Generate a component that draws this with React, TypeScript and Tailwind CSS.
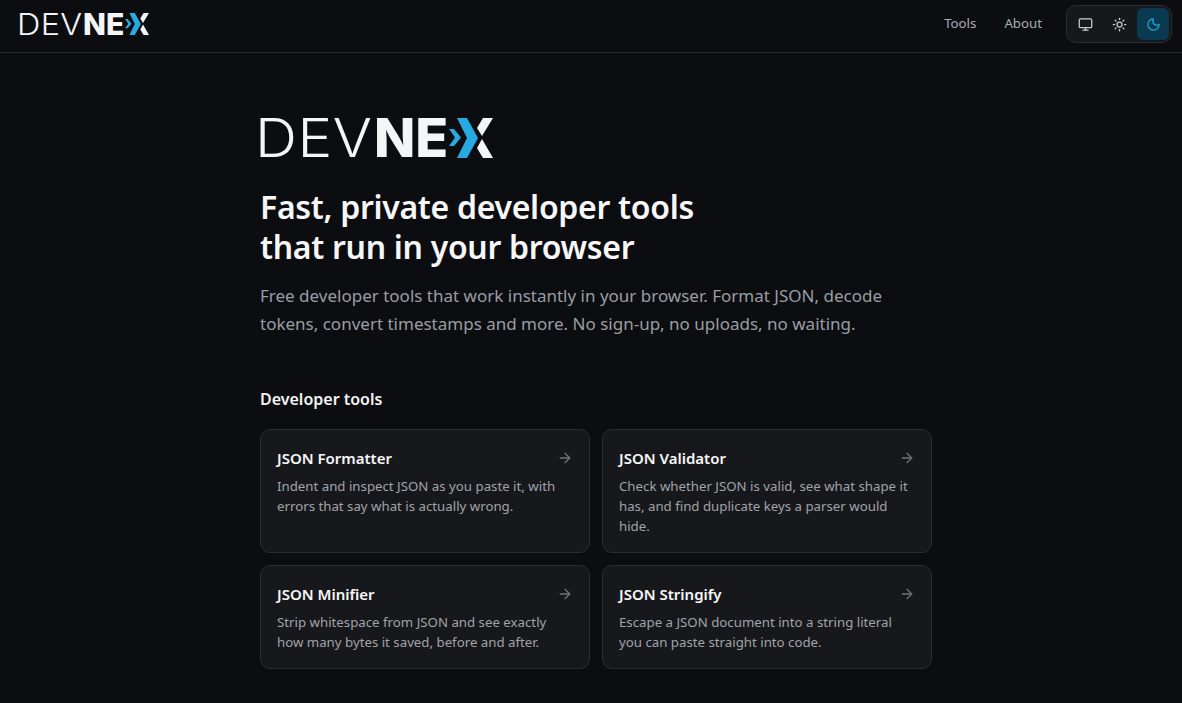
import { ArrowRight, Monitor, Moon, Sun } from 'lucide-react';

const TOOLS = [
  {
    name: 'JSON Formatter',
    text: 'Indent and inspect JSON as you paste it, with errors that say what is actually wrong.',
  },
  {
    name: 'JSON Validator',
    text: 'Check whether JSON is valid, see what shape it has, and find duplicate keys a parser would hide.',
  },
  {
    name: 'JSON Minifier',
    text: 'Strip whitespace from JSON and see exactly how many bytes it saved, before and after.',
  },
  {
    name: 'JSON Stringify',
    text: 'Escape a JSON document into a string literal you can paste straight into code.',
  },
];

function Logo({ big }: { big?: boolean }) {
  return (
    <div
      className={[
        'flex items-center font-["Inter",sans-serif] text-[#f4f5f7] leading-none',
        big ? 'text-[54px] h-[40px] -ml-[5px]' : 'text-[30px] h-[22px] -ml-[3px]',
      ].join(' ')}
    >
      <span
        className={[
          'inline-block whitespace-nowrap font-light origin-left scale-x-[1.08]',
          big ? 'w-[119px] tracking-[0.5px]' : 'w-[66px] tracking-[0.3px]',
        ].join(' ')}
      >
        DEV
      </span>
      <span className="font-extrabold">NE</span>
      <svg viewBox="0 0 44 40" className={big ? 'w-[44px] h-[40px] ml-[1px]' : 'w-[24px] h-[22px] ml-[1px]'}>
        <path d="M34 0H44L33 18L28 10Z" fill="#f4f5f7" />
        <path d="M28 30L33 21L44 40H34Z" fill="#f4f5f7" />
        <path d="M8 0H18L29 20L18 40H8L18 20Z" fill="#27a9e1" />
        <path d="M0 11H5L12 19.5L5 28H0L6 19.5Z" fill="#27a9e1" />
      </svg>
    </div>
  );
}

function ThemeSwitch() {
  return (
    <div className="flex items-center gap-[2px] h-[38px] p-[2px] rounded-[10px] border border-[#2a2c31] bg-[#17181c]">
      <button type="button" className="w-[32px] h-[32px] flex items-center justify-center text-[#c9cbd0]">
        <Monitor size={15} />
      </button>
      <button type="button" className="w-[32px] h-[32px] flex items-center justify-center text-[#c9cbd0]">
        <Sun size={15} />
      </button>
      <button type="button" className="w-[32px] h-[32px] rounded-md flex items-center justify-center bg-[#0a3a4f] text-[#22a5d8]">
        <Moon size={15} />
      </button>
    </div>
  );
}

function ToolCard({ name, text }: { name: string; text: string }) {
  return (
    <div className="rounded-[10px] border border-[#2a2c31] bg-[#17181c] px-4 pt-[16px] pb-[16px]">
      <div className="flex items-center justify-between">
        <h3 className="text-[15px] leading-[24px] font-semibold text-[#f7f7f8]">{name}</h3>
        <ArrowRight size={16} className="text-[#6f7278]" />
      </div>
      <p className="mt-[6px] text-[13.25px] leading-[20px] text-[#a0a3a9]">{text}</p>
    </div>
  );
}

export default function App() {
  return (
    <div className="min-h-[703px] bg-[#0c0d11] font-['Noto_Sans',sans-serif]">
      <header className="h-[53px] flex items-center justify-between pl-[20px] pr-[10px] pb-[4px] border-b border-[#26282c]">
        <Logo />
        <div className="flex items-center">
          <nav className="flex items-center gap-[28px] mr-[24px] text-[13.25px] text-[#a9acb2]">
            <span>Tools</span>
            <span>About</span>
          </nav>
          <ThemeSwitch />
        </div>
      </header>

      <main className="ml-[260px] w-[672px] pt-[65px]">
        <Logo big />
        <h1 className="mt-[29px] text-[32px] leading-[40px] font-semibold text-[#f7f7f8] tracking-[-0.3px]">
          Fast, private developer tools
          <br />
          that run in your browser
        </h1>
        <p className="mt-[15px] text-[17px] leading-[28px] text-[#9a9da3] max-w-[640px]">
          Free developer tools that work instantly in your browser. Format JSON, decode tokens, convert timestamps and
          more. No sign-up, no uploads, no waiting.
        </p>

        <h2 className="mt-[47px] text-[16px] leading-[28px] font-semibold text-[#f2f3f4]">Developer tools</h2>
        <div className="mt-[16px] grid grid-cols-2 gap-[12px]">
          {TOOLS.map((t) => (
            <ToolCard key={t.name} name={t.name} text={t.text} />
          ))}
        </div>
      </main>
    </div>
  );
}
